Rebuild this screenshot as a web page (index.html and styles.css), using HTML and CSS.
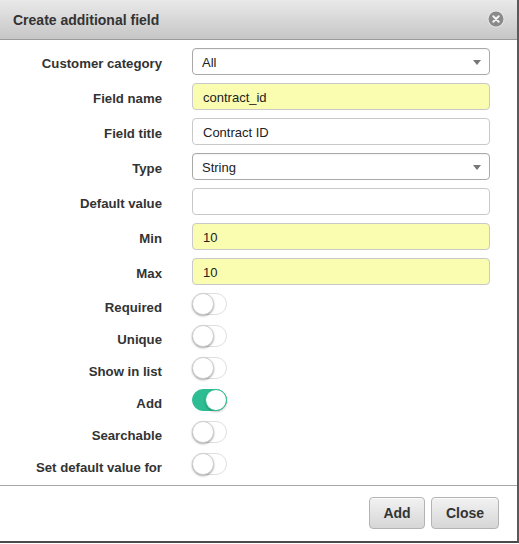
FILE: index.html
```html
<!DOCTYPE html>
<html>
<head>
<meta charset="utf-8">
<link rel="stylesheet" href="styles.css">
</head>
<body>
<div class="dialog">
  <div class="header">
    <span class="title">Create additional field</span>
    <span class="close-x">
      <svg width="18" height="18" viewBox="0 0 18 18">
        <circle cx="9" cy="9" r="8.5" fill="#f2f2f2" opacity="0.6"/>
        <circle cx="9" cy="9" r="7.5" fill="#8a8a8a"/>
        <path d="M6.3 6.3 L11.7 11.7 M11.7 6.3 L6.3 11.7" stroke="#f4f4f4" stroke-width="2" stroke-linecap="round"/>
      </svg>
    </span>
  </div>
  <div class="body">
    <div class="row"><label>Customer category</label><div class="select">All<span class="caret"></span></div></div>
    <div class="row"><label>Field name</label><div class="input yellow">contract_id</div></div>
    <div class="row"><label>Field title</label><div class="input">Contract ID</div></div>
    <div class="row"><label>Type</label><div class="select">String<span class="caret"></span></div></div>
    <div class="row"><label>Default value</label><div class="input"></div></div>
    <div class="row"><label>Min</label><div class="input yellow">10</div></div>
    <div class="row"><label>Max</label><div class="input yellow">10</div></div>
    <div class="row trow"><label>Required</label><span class="toggle"><span class="knob"></span></span></div>
    <div class="row trow"><label>Unique</label><span class="toggle"><span class="knob"></span></span></div>
    <div class="row trow"><label>Show in list</label><span class="toggle"><span class="knob"></span></span></div>
    <div class="row trow"><label>Add</label><span class="toggle on"><span class="knob"></span></span></div>
    <div class="row trow"><label>Searchable</label><span class="toggle"><span class="knob"></span></span></div>
    <div class="row trow"><label>Set default value for</label><span class="toggle"><span class="knob"></span></span></div>
  </div>
  <div class="footer">
    <button class="btn btn-add">Add</button>
    <button class="btn btn-close">Close</button>
  </div>
</div>
</body>
</html>
```

FILE: styles.css
```css
html, body {
  margin: 0;
  padding: 0;
  background: #fff;
}
body {
  font-family: "Liberation Sans", Arial, Helvetica, sans-serif;
  font-size: 13px;
  color: #333;
}
.dialog {
  width: 517px;
  height: 541px;
  border-right: 2px solid #5a5a5a;
  border-bottom: 2px solid #4a4a4a;
  display: flex;
  flex-direction: column;
  background: #fff;
}
.header {
  height: 40px;
  border-bottom: 1px solid #9a9a9a;
  background: linear-gradient(#e9e9e9, #c6c6c6);
  display: flex;
  align-items: center;
  justify-content: space-between;
  padding: 0 12px 0 13px;
  box-sizing: border-box;
  flex: none;
}
.title {
  font-weight: bold;
  font-size: 14px;
  color: #333;
  padding-top: 1px;
}
.close-x {
  display: flex;
  margin-top: -2px;
}
.body {
  padding: 8px 0 7px 0;
  display: flex;
  flex-direction: column;
  gap: 8px;
  flex: 1;
}
.row {
  display: grid;
  grid-template-columns: 162px 298px;
  column-gap: 30px;
  align-items: start;
}
.row label {
  text-align: right;
  font-weight: bold;
  font-size: 13.2px;
  line-height: 19px;
  padding-top: 6px;
  color: #333;
}
.input, .select {
  height: 27px;
  box-sizing: border-box;
  border: 1px solid #c9c9c9;
  border-radius: 4px;
  padding: 1px 10px 0 10px;
  line-height: 25px;
  font-size: 13px;
  color: #222;
  background: #fff;
}
.select {
  border-color: #a9a9a9;
  padding-left: 9px;
  position: relative;
  box-shadow: inset 0 1px 1px rgba(0,0,0,0.05);
}
.yellow {
  background: #fafcb0;
}
.caret {
  position: absolute;
  right: 8px;
  top: 11px;
  width: 0;
  height: 0;
  border-left: 4px solid transparent;
  border-right: 4px solid transparent;
  border-top: 5px solid #777;
}
.trow label {
  padding-top: 6px;
  line-height: 18px;
}
.toggle {
  width: 35px;
  height: 22px;
  box-sizing: border-box;
  border-radius: 11px;
  border: 1px solid #dfdfdf;
  background: #fff;
  position: relative;
  display: block;
}
.knob {
  position: absolute;
  left: -1px;
  top: -1px;
  width: 22px;
  height: 22px;
  box-sizing: border-box;
  border-radius: 50%;
  background: #fff;
  border: 1px solid #d0d0d0;
  box-shadow: 0 1px 2px rgba(0,0,0,0.35);
}
.toggle.on {
  background: #2ebd93;
  border-color: #2ebd93;
}
.toggle.on .knob {
  left: auto;
  right: -1px;
  border-color: #2ebd93;
  box-shadow: 0 1px 2px rgba(0,0,0,0.25);
}
.footer {
  border-top: 1px solid #a8a8a8;
  height: 56px;
  box-sizing: border-box;
  display: flex;
  justify-content: flex-end;
  align-items: flex-start;
  padding: 11px 18px 0 0;
  gap: 6px;
  flex: none;
}
.btn {
  height: 32px;
  border: 1px solid #b3b3b3;
  border-radius: 4px;
  background: linear-gradient(#f2f2f2, #d6d6d6);
  font-family: "Liberation Sans", Arial, Helvetica, sans-serif;
  font-weight: bold;
  font-size: 14px;
  color: #333;
  padding: 0;
  box-shadow: inset 0 1px 0 rgba(255,255,255,0.7);
}
.btn-add {
  width: 56px;
}
.btn-close {
  width: 68px;
}
```
